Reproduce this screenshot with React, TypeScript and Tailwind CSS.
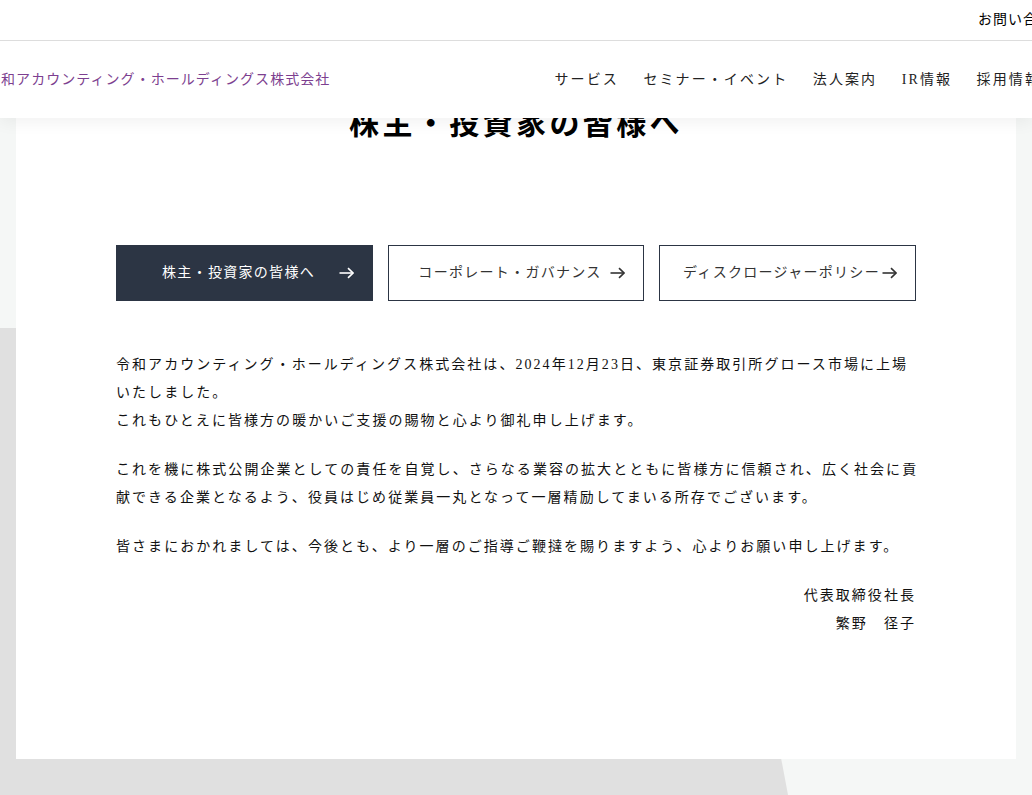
const fontStack = "font-['Liberation_Serif','Noto_Sans_CJK_JP',serif]";

function ArrowIcon() {
  return (
    <svg width="15" height="12" viewBox="0 0 15 12" fill="none" stroke="currentColor" strokeWidth="1.6">
      <path d="M0.5 6H14" />
      <path d="M9 1.2L14 6L9 10.8" />
    </svg>
  );
}

const navItems = ["サービス", "セミナー・イベント", "法人案内", "IR情報", "採用情報"];

const links = [
  { label: "株主・投資家の皆様へ", active: true, width: "w-[257px]" },
  { label: "コーポレート・ガバナンス", active: false, width: "w-[256px]" },
  { label: "ディスクロージャーポリシー", active: false, width: "w-[257px]" },
];

function LinkButton({ label, active, width }: { label: string; active: boolean; width: string }) {
  return (
    <a
      className={`relative flex h-14 items-center justify-center whitespace-nowrap border border-[#2c3544] pr-[12px] text-sm tracking-[1.3px] ${width} ${
        active ? "bg-[#2c3544] text-white" : "bg-white text-[#333]"
      }`}
    >
      <span>{label}</span>
      <span className="absolute right-[18px] top-[21px]">
        <ArrowIcon />
      </span>
    </a>
  );
}

export default function App() {
  return (
    <div className={`relative h-[795px] w-[1032px] overflow-hidden bg-[#f5f7f6] ${fontStack}`}>
      <div className="absolute inset-0 bg-[#e0e0e0] [clip-path:polygon(0_328px,700px_328px,788px_795px,0_795px)]" />

      <header className="absolute left-0 right-0 top-0 z-10 bg-white shadow-[0_4px_16px_rgba(0,0,0,0.06)]">
        <div className="flex h-[41px] items-center justify-end overflow-hidden border-b border-[#dddddd]">
          <a className="-mr-[36px] whitespace-nowrap text-sm tracking-[1px] text-black">お問い合わせ</a>
        </div>
        <div className="flex h-[77px] items-center justify-between overflow-hidden">
          <a className="-ml-[14px] whitespace-nowrap text-sm tracking-[1.05px] text-[#7d3f90]">
            令和アカウンティング・ホールディングス株式会社
          </a>
          <nav className="-mr-[9px] flex gap-[24.5px] whitespace-nowrap text-sm tracking-[2.1px] text-[#222]">
            {navItems.map((item) => (
              <a key={item}>{item}</a>
            ))}
          </nav>
        </div>
      </header>

      <main className="relative mx-4 h-[759px] bg-white px-[100px] pt-[104px]">
        <h1 className="text-center text-[30px] font-bold leading-[40px] tracking-[3.4px] text-black">
          株主・投資家の皆様へ
        </h1>

        <div className="mt-[101px] flex gap-[15px]">
          {links.map((link) => (
            <LinkButton key={link.label} label={link.label} active={link.active} width={link.width} />
          ))}
        </div>

        <div className="-mr-1 mt-[50px] text-sm leading-7 tracking-[2.05px] text-[#111]">
          <p>
            令和アカウンティング・ホールディングス株式会社は、2024年12月23日、東京証券取引所グロース市場に上場いたしました。
            <br />
            これもひとえに皆様方の暖かいご支援の賜物と心より御礼申し上げます。
          </p>
          <p className="mt-[21px]">
            これを機に株式公開企業としての責任を自覚し、さらなる業容の拡大とともに皆様方に信頼され、広く社会に貢献できる企業となるよう、役員はじめ従業員一丸となって一層精励してまいる所存でございます。
          </p>
          <p className="mt-[21px]">
            皆さまにおかれましては、今後とも、より一層のご指導ご鞭撻を賜りますよう、心よりお願い申し上げます。
          </p>
          <p className="mt-[21px] pr-1 text-right">
            代表取締役社長
            <br />
            繁野　径子
          </p>
        </div>
      </main>
    </div>
  );
}
